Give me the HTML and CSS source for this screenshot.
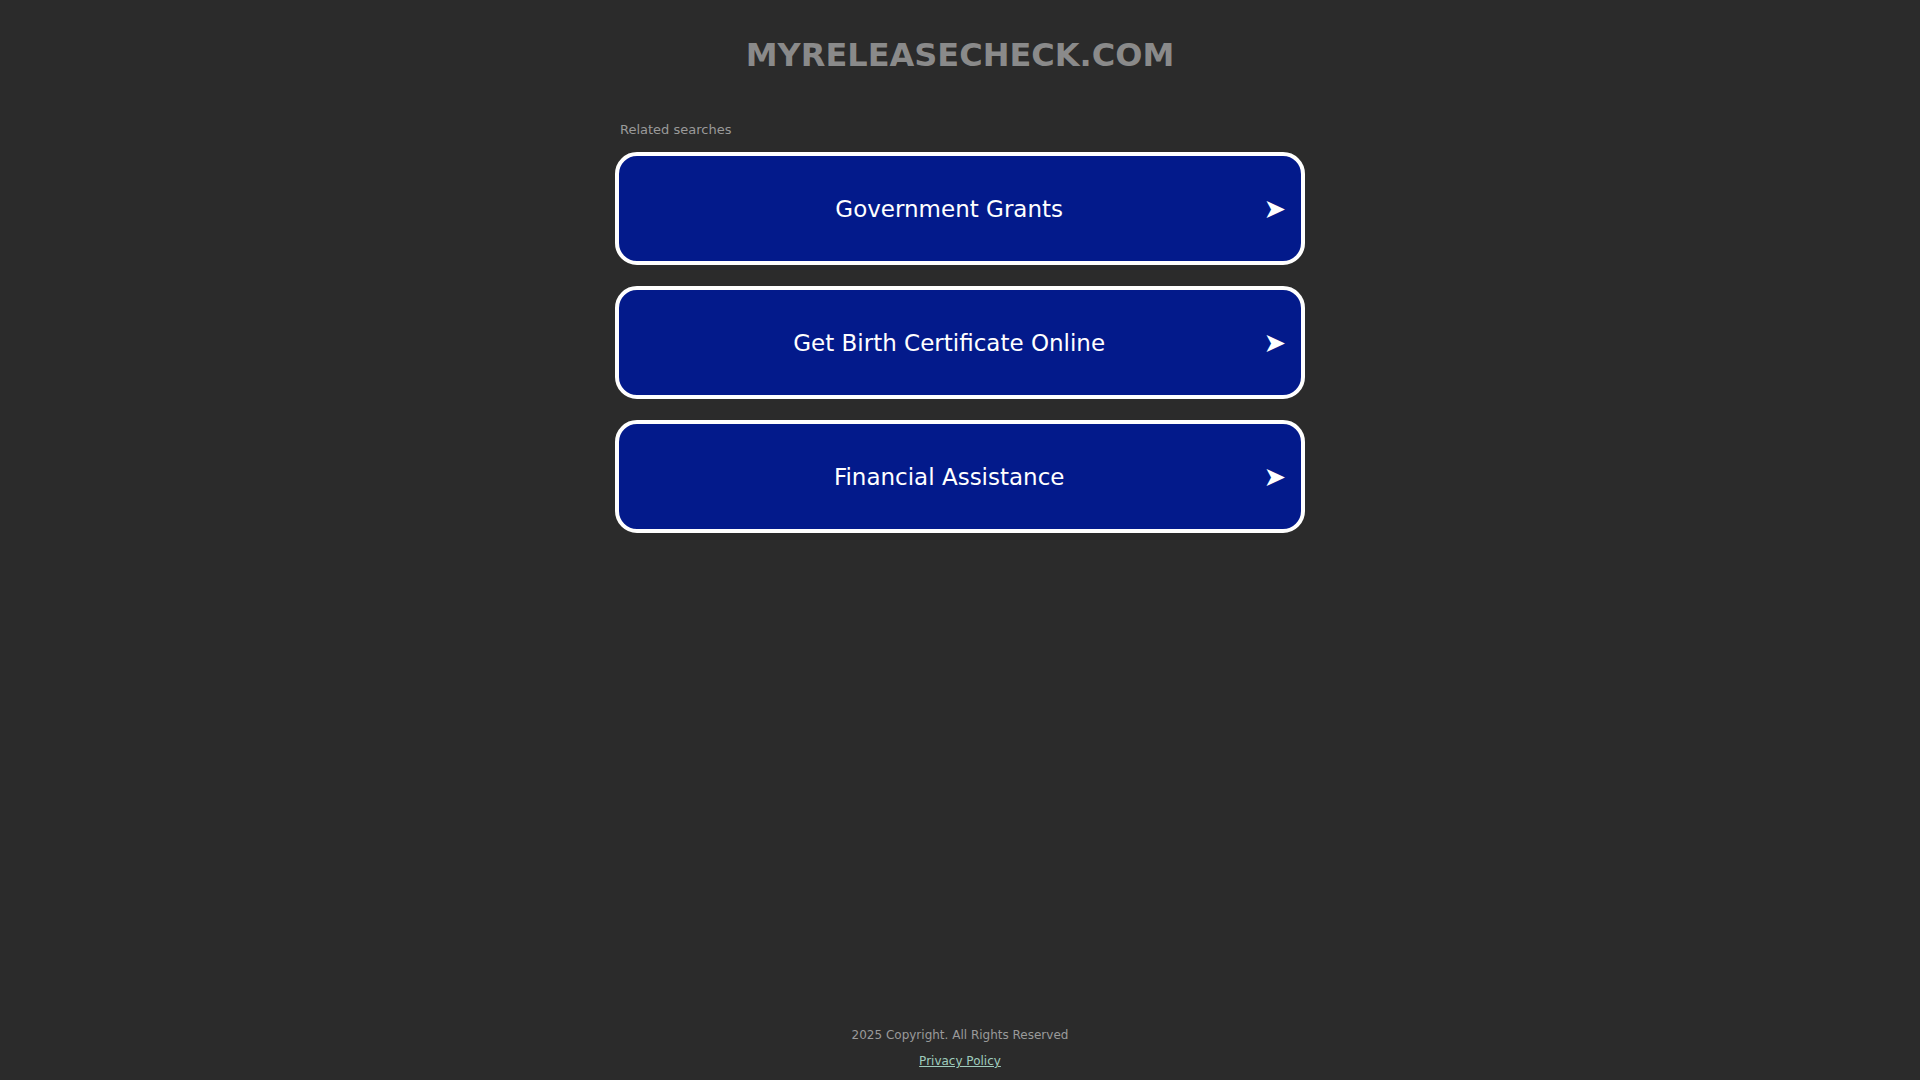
FILE: index.html
```html
<!DOCTYPE html>
<html lang="en">
<head>
  <meta charset="UTF-8" />
  <meta name="viewport" content="width=device-width, initial-scale=1.0" />
  <title>myreleasecheck.com</title>
  <link rel="stylesheet" href="styles.css">
</head>
<body>
  <div class="page">
    <header class="header">
      <h1 class="domain">MYRELEASECHECK.COM</h1>
    </header>

    <main class="searches">
      <p class="searches-title">Related searches</p>
      <a class="search-item" href="#"><span class="search-label">Government Grants</span><span class="search-arrow">➤</span></a>
      <a class="search-item" href="#"><span class="search-label">Get Birth Certificate Online</span><span class="search-arrow">➤</span></a>
      <a class="search-item" href="#"><span class="search-label">Financial Assistance</span><span class="search-arrow">➤</span></a>
    </main>

    <footer class="footer">
      <p class="copyright">2025 Copyright. All Rights Reserved</p>
      <a class="privacy" href="#">Privacy Policy</a>
    </footer>
  </div>
</body>
</html>
```

FILE: styles.css
```css
body {
  margin: 0;
  padding: 0;
  background: #2b2b2b;
  font-family: "DejaVu Sans", Verdana, sans-serif;
}
.page {
  display: flex;
  flex-direction: column;
  min-height: 100vh;
}
.header {
  padding-top: 35px;
  text-align: center;
}
.domain {
  margin: 0;
  font-size: 32px;
  line-height: 40px;
  font-weight: bold;
  color: #8a8a8a;
}
.searches {
  width: 690px;
  margin: 47px auto 0 auto;
  display: flex;
  flex-direction: column;
  gap: 21px;
}
.searches-title {
  margin: 0 0 -7px 5px;
  font-size: 13px;
  line-height: 16px;
  color: #9a9a9a;
}
.search-item {
  display: flex;
  align-items: center;
  height: 113px;
  box-sizing: border-box;
  padding: 0 15px 0 16px;
  border: 4px solid #fff;
  border-radius: 22px;
  background: #031a8b;
  color: #fff;
  text-decoration: none;
}
.search-label {
  flex: 1;
  text-align: center;
  font-size: 23px;
}
.search-arrow {
  font-size: 27px;
}
.footer {
  margin-top: auto;
  padding-bottom: 11px;
  text-align: center;
  font-size: 12px;
  line-height: 16px;
}
.copyright {
  margin: 0 0 10px 0;
  color: #9a9a9a;
}
.privacy {
  color: #9fcbbd;
}
```
